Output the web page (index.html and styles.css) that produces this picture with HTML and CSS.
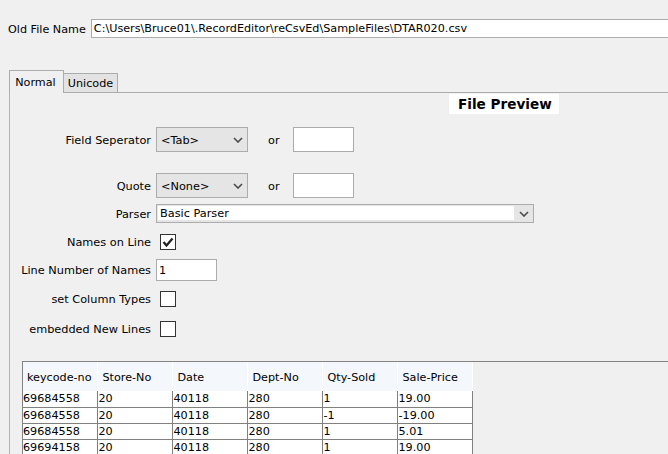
FILE: index.html
```html
<!DOCTYPE html>
<html>
<head>
<meta charset="utf-8">
<link rel="stylesheet" href="styles.css">
</head>
<body>
<div class="file-row">
  <span class="top-label">Old File Name</span>
  <div class="path-field">C:\Users\Bruce01\.RecordEditor\reCsvEd\SampleFiles\DTAR020.csv</div>
</div>
<div class="tabs">
  <div class="tab tab-sel">Normal</div>
  <div class="tab">Unicode</div>
</div>
<div class="panel">
  <div class="title">File Preview</div>
  <div class="row r1">
    <span class="lbl">Field Seperator</span>
    <div class="combo combo-small"><span>&lt;Tab&gt;</span><svg class="chev" width="10" height="6" viewBox="0 0 10 6"><polyline points="1,1 5,5 9,1" fill="none" stroke="#4a4a4a" stroke-width="1.6"/></svg></div>
    <span class="or">or</span>
    <div class="box"></div>
  </div>
  <div class="row r2">
    <span class="lbl">Quote</span>
    <div class="combo combo-small"><span>&lt;None&gt;</span><svg class="chev" width="10" height="6" viewBox="0 0 10 6"><polyline points="1,1 5,5 9,1" fill="none" stroke="#4a4a4a" stroke-width="1.6"/></svg></div>
    <span class="or">or</span>
    <div class="box"></div>
  </div>
  <div class="row r3">
    <span class="lbl">Parser</span>
    <div class="combo-wide"><div class="combo-field">Basic Parser</div><div class="combo-btn"><svg width="10" height="6" viewBox="0 0 10 6"><polyline points="1,1 5,5 9,1" fill="none" stroke="#4a4a4a" stroke-width="1.6"/></svg></div></div>
  </div>
  <div class="row r4">
    <span class="lbl">Names on Line</span>
    <div class="cb"><svg width="14" height="14" viewBox="0 0 14 14"><polyline points="2.5,7 5.5,10.5 11.5,3.5" fill="none" stroke="#222" stroke-width="2.3"/></svg></div>
  </div>
  <div class="row r5">
    <span class="lbl">Line Number of Names</span>
    <div class="num">1</div>
  </div>
  <div class="row r6">
    <span class="lbl">set Column Types</span>
    <div class="cb"></div>
  </div>
  <div class="row r7">
    <span class="lbl">embedded New Lines</span>
    <div class="cb"></div>
  </div>
  <div class="table-wrap">
    <table class="grid">
      <thead>
        <tr><th class="c1">keycode-no</th><th>Store-No</th><th>Date</th><th>Dept-No</th><th>Qty-Sold</th><th>Sale-Price</th></tr>
      </thead>
      <tbody>
        <tr><td class="c1">69684558</td><td>20</td><td>40118</td><td>280</td><td>1</td><td>19.00</td></tr>
        <tr><td class="c1">69684558</td><td>20</td><td>40118</td><td>280</td><td>-1</td><td>-19.00</td></tr>
        <tr><td class="c1">69684558</td><td>20</td><td>40118</td><td>280</td><td>1</td><td>5.01</td></tr>
        <tr><td class="c1">69694158</td><td>20</td><td>40118</td><td>280</td><td>1</td><td>19.00</td></tr>
      </tbody>
    </table>
  </div>
</div>
</body>
</html>
```

FILE: styles.css
```css
html, body {
  margin: 0;
  padding: 0;
  background: #f0f0f0;
  width: 668px;
  height: 454px;
  overflow: hidden;
}
body {
  font-family: "DejaVu Sans", sans-serif;
  font-size: 11.3px;
  color: #000;
}
.file-row {
  display: flex;
  align-items: center;
  padding-top: 19px;
  padding-left: 8px;
  height: 19px;
  font-size: 11.2px;
}
.top-label {
  margin-right: 5px;
  white-space: nowrap;
  padding-top: 2px;
}
.path-field {
  flex: 1;
  height: 19px;
  box-sizing: border-box;
  background: #fff;
  border: 1px solid #acacac;
  border-right: none;
  padding-left: 2px;
  line-height: 18px;
  white-space: nowrap;
}
.tabs {
  display: flex;
  align-items: flex-end;
  margin-top: 32px;
  margin-left: 9px;
  height: 22px;
  font-size: 11.2px;
}
.tab {
  box-sizing: border-box;
  height: 19px;
  width: 54px;
  border: 1px solid #acacac;
  border-left: none;
  border-bottom: none;
  background: #e3e3e3;
  text-align: center;
  line-height: 19px;
}
.tab-sel {
  position: relative;
  z-index: 1;
  width: 55px;
  height: 23px;
  margin-bottom: -1px;
  border-left: 1px solid #acacac;
  background: #f0f0f0;
  line-height: 24px;
  padding-right: 2px;
}
.panel {
  margin-left: 9px;
  border-left: 1px solid #b4b4b4;
  border-top: 1px solid #acacac;
  height: 400px;
}
.title {
  display: inline-block;
  margin-left: 439px;
  margin-top: 1px;
  height: 20px;
  line-height: 21px;
  padding: 0 7px 0 9px;
  background: #fff;
  font-weight: bold;
  font-size: 13.6px;
  vertical-align: top;
}
.row {
  display: flex;
  align-items: center;
}
.lbl {
  width: 141px;
  margin-right: 5px;
  text-align: right;
  white-space: nowrap;
  padding-top: 1px;
}
.r1 { margin-top: 13px; height: 25px; }
.r2 { margin-top: 21px; height: 25px; }
.r3 { margin-top: 6px; height: 19px; }
.r4 { margin-top: 11px; height: 16px; }
.r5 { margin-top: 9px; height: 22px; }
.r6 { margin-top: 10px; height: 16px; }
.r7 { margin-top: 14px; height: 16px; }
.combo {
  box-sizing: border-box;
  display: flex;
  align-items: center;
  justify-content: space-between;
  height: 25px;
  border: 1px solid #acacac;
  background: #e5e5e5;
  padding: 1px 4px 0 4px;
}
.combo-small { width: 92px; }
.chev { display: block; }
.or {
  margin-left: 20px;
  width: 25px;
  padding-top: 1px;
}
.box {
  box-sizing: border-box;
  width: 61px;
  height: 25px;
  background: #fff;
  border: 1px solid #acacac;
}
.combo-wide {
  box-sizing: border-box;
  display: flex;
  width: 378px;
  height: 19px;
  border: 1px solid #acacac;
  background: #e5e5e5;
}
.combo-field {
  flex: 1;
  margin: 1px 0 2px 1px;
  background: #fff;
  padding-left: 2px;
  line-height: 15px;
}
.combo-btn {
  width: 19px;
  display: flex;
  align-items: center;
  justify-content: center;
}
.cb {
  box-sizing: border-box;
  width: 16px;
  height: 16px;
  margin-left: 4px;
  border: 1px solid #333;
  background: #fff;
  display: flex;
  align-items: center;
  justify-content: center;
}
.num {
  box-sizing: border-box;
  width: 61px;
  height: 22px;
  background: #fff;
  border: 1px solid #acacac;
  padding-left: 2px;
  line-height: 21px;
}
.table-wrap {
  margin-top: 24px;
  margin-left: 12px;
  border-top: 1px solid #828282;
  border-left: 1px solid #828282;
  height: 200px;
}
.grid {
  border-collapse: collapse;
  table-layout: fixed;
  font-size: 11.2px;
}
.grid th {
  box-sizing: border-box;
  width: 75px;
  height: 29px;
  padding: 2px 0 0 5px;
  background: #f4f7fc;
  border-right: 1px solid #fff;
  text-align: left;
  font-weight: normal;
  white-space: nowrap;
  overflow: hidden;
}
.grid th.c1 { width: 74px; padding-left: 4px; }
.grid td {
  box-sizing: border-box;
  width: 75px;
  height: 16px;
  padding: 0 0 0 1px;
  border-right: 1px solid #808080;
  border-bottom: 1px solid #808080;
  background: #fff;
  line-height: 15px;
  white-space: nowrap;
}
.grid td.c1 { width: 74px; padding-left: 0; }
```
